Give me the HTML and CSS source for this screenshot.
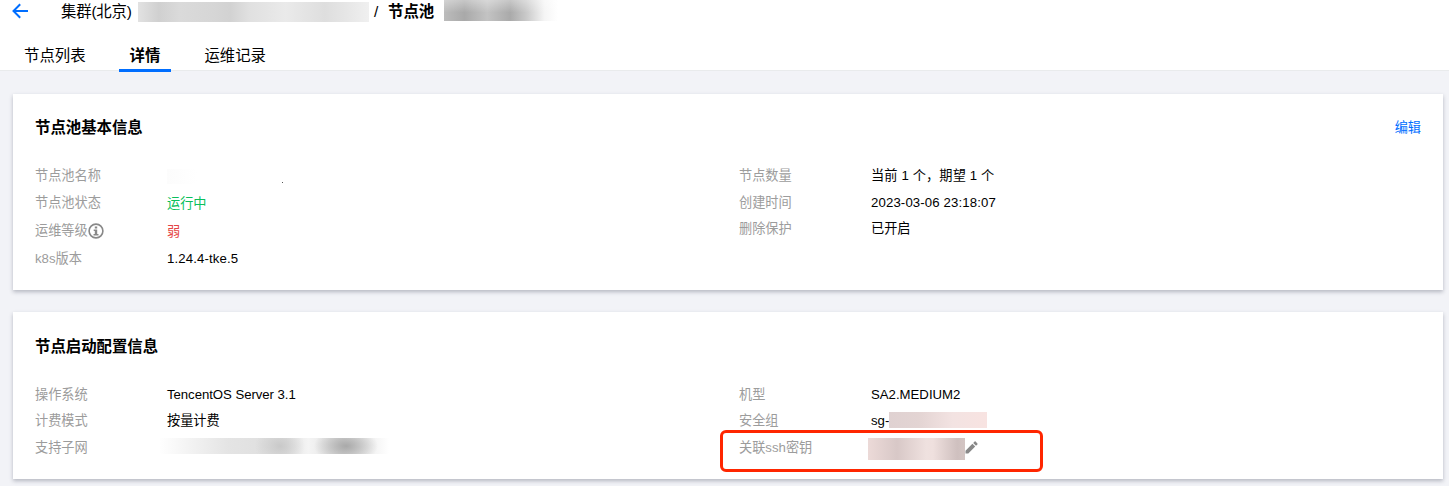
FILE: index.html
```html
<!DOCTYPE html>
<html lang="zh-CN">
<head>
    <meta charset="UTF-8">
    <meta name="viewport" content="width=device-width, initial-scale=1.0">
    <title>节点池详情</title>
    <link rel="stylesheet" href="styles.css">
</head>
<body>
    <header class="header">
        <div class="breadcrumb">
            <svg class="back" viewBox="0 0 16 16" width="16" height="16">
                <path d="M8.2 1.2L1.5 8l6.7 6.8M1.5 8H16" fill="none" stroke="#006eff" stroke-width="2"/>
            </svg>
            <span class="cluster">集群(北京)</span>
            <span class="mask mask-cluster"></span>
            <span class="slash">/</span>
            <span class="pool">节点池</span>
            <span class="mask mask-pool"></span>
        </div>
        <nav class="tabs">
            <a class="tab">节点列表</a>
            <a class="tab active">详情</a>
            <a class="tab">运维记录</a>
        </nav>
    </header>

    <main class="content">
        <section class="card card-basic">
            <div class="card-head">
                <h3>节点池基本信息</h3>
                <a class="edit">编辑</a>
            </div>
            <div class="columns">
                <div class="column">
                    <div class="row"><span class="label">节点池名称</span><span class="mask mask-name"></span></div>
                    <div class="row"><span class="label">节点池状态</span><span class="value running">运行中</span></div>
                    <div class="row level">
                        <span class="label">运维等级<svg class="info" viewBox="0 0 16 16" width="16" height="16">
                            <circle cx="8" cy="8" r="6.9" fill="none" stroke="#888" stroke-width="1.6"/>
                            <path d="M6.8 3.5h2.4v2H6.8zM5.7 6.5h3.5v4.4h1.3v1.5H5.5v-1.5h1.3V8H5.7z" fill="#888"/>
                        </svg></span>
                        <span class="value weak">弱</span>
                    </div>
                    <div class="row version"><span class="label">k8s版本</span><span class="value spaced">1.24.4-tke.5</span></div>
                </div>
                <div class="column">
                    <div class="row"><span class="label">节点数量</span><span class="value spaced">当前 1 个，期望 1 个</span></div>
                    <div class="row"><span class="label">创建时间</span><span class="value spaced">2023-03-06 23:18:07</span></div>
                    <div class="row"><span class="label">删除保护</span><span class="value">已开启</span></div>
                </div>
            </div>
        </section>

        <section class="card card-launch">
            <div class="card-head">
                <h3>节点启动配置信息</h3>
            </div>
            <div class="columns">
                <div class="column">
                    <div class="row"><span class="label">操作系统</span><span class="value os">TencentOS Server 3.1</span></div>
                    <div class="row"><span class="label">计费模式</span><span class="value">按量计费</span></div>
                    <div class="row"><span class="label">支持子网</span><span class="mask mask-subnet"></span></div>
                </div>
                <div class="column">
                    <div class="row"><span class="label">机型</span><span class="value">SA2.MEDIUM2</span></div>
                    <div class="row"><span class="label">安全组</span><span class="value">sg-</span><span class="mask mask-sg"></span></div>
                    <div class="row ssh">
                        <span class="label">关联ssh密钥</span><span class="mask mask-key"></span>
                        <svg class="pencil" viewBox="0 0 13 13" width="13" height="13">
                            <path d="M.5 12.5V9.7L7.4 2.8l2.8 2.8-6.9 6.9zM8.2 2L9.6.6q.5-.5 1 0l1.8 1.8q.5.5 0 1L11 4.8z" fill="#888"/>
                        </svg>
                        <span class="highlight"></span>
                    </div>
                </div>
            </div>
        </section>
    </main>
</body>
</html>
```

FILE: styles.css
```css
body {
    margin: 0;
    height: 486px;
    overflow: hidden;
    background-color: #f2f3f7;
    color: #000;
    font-family: "Liberation Sans", "Noto Sans CJK SC", sans-serif;
    font-size: 13.2px;
}
.header {
    height: 70px;
    background: #fff;
    border-bottom: 1px solid #e9ebec;
}
.breadcrumb {
    display: flex;
    align-items: center;
    height: 22px;
    padding-left: 12px;
    font-size: 15.4px;
    line-height: 22px;
    white-space: nowrap;
}
.back {
    margin-right: 33px;
}
.cluster {
    width: 77px;
    padding-top: 1px;
    letter-spacing: -0.2px;
}
.slash {
    width: 14px;
    margin-left: 5px;
    padding-top: 1px;
}
.pool {
    width: 56px;
    padding-top: 1px;
    font-weight: bold;
}
.mask {
    flex: none;
}
.mask-cluster {
    width: 231px;
    height: 20px;
    margin-top: 2px;
    background: linear-gradient(90deg, #e2e2e2, #d0d0d0 9%, #dadada 18%, #d6d6d6 32%, #d2d2d2 40%, #e0e0e0 48%, #eaeaea 64%, #dedede 81%, #e6e6e6 90%, #f0f0f0);
}
.mask-pool {
    width: 114px;
    height: 21px;
    margin-top: -1px;
    background:
        linear-gradient(180deg, rgba(255, 255, 255, 0.35), transparent 60%),
        linear-gradient(90deg, #bcbcbc, #a9a9a9 18%, #c3c3c3 38%, #aaa 58%, #c9c9c9 72%, #f5f5f5 88%, #fff);
}
.tabs {
    display: flex;
    gap: 22px;
    height: 50px;
    padding-left: 13px;
}
.tab {
    height: 47px;
    padding: 0 11px;
    font-size: 15.4px;
    line-height: 68px;
    border-bottom: 3px solid transparent;
}
.tab.active {
    font-weight: bold;
    border-bottom-color: #006eff;
}
.content {
    display: flex;
    flex-direction: column;
    gap: 22px;
    padding: 23px 6px 0 13px;
}
.card {
    box-sizing: border-box;
    padding: 23px 22px 0;
    background: #fff;
    box-shadow: 0 2px 4px rgba(54, 58, 80, 0.32);
}
.card-basic {
    height: 196px;
}
.card-launch {
    height: 167px;
    padding-top: 24px;
}
.card-head {
    display: flex;
    justify-content: space-between;
    align-items: center;
    height: 22px;
}
h3 {
    margin: 0;
    font-size: 15.4px;
    line-height: 24px;
}
.edit {
    line-height: 20px;
    padding-bottom: 1px;
    color: #006eff;
}
.columns {
    display: grid;
    grid-template-columns: 704px 1fr;
    margin-top: 24px;
}
.card-launch .columns {
    margin-top: 23.5px;
}
.row {
    display: flex;
    align-items: center;
    height: 26.5px;
    line-height: 20px;
}
.row.level,
.row.version {
    height: 28px;
}
.row.level {
    margin-top: 1px;
}
.label {
    display: flex;
    align-items: center;
    width: 132px;
    color: #9c9c9c;
}
.spaced {
    letter-spacing: 0.13px;
}
.os {
    letter-spacing: -0.05px;
}
.running,
.weak {
    padding-top: 2px;
}
.running {
    color: #0abf5b;
}
.weak {
    color: #e54545;
}
.mask-name {
    width: 117px;
    height: 15px;
    background:
        linear-gradient(#555, #555) 115px 13px / 1px 1px no-repeat,
        linear-gradient(90deg, #fcfcfc, #fff) 0 0 / 30px 15px no-repeat;
}
.mask-subnet {
    width: 230px;
    height: 16px;
    margin: -3px 0 0 -8px;
    background:
        radial-gradient(ellipse 32px 18px at 187px 8px, #a9a9a9, transparent),
        radial-gradient(ellipse 25px 20px at 121px 8px, #c9c9c9, transparent),
        linear-gradient(90deg, #fff, #e4e4e4 30%, #e0e0e0 45%, #e3e3e3 55%, #f4f4f4 65%, #ddd 80%, #fff);
}
.mask-sg {
    width: 98px;
    height: 16px;
    margin-top: -2px;
    background: linear-gradient(90deg, #dfd1d1, #e3d4d3 30%, #f3e3e2 65%, #f8e3e1);
}
.mask-key {
    width: 97px;
    height: 22px;
    margin: 2px 0 0 -3px;
    background: linear-gradient(90deg, #ecdad8, #d8c8c7 30%, #efe1df 60%, #efe0de 67%, #cfc0bf 92%, #d3c5c3);
}
.ssh {
    position: relative;
}
.highlight {
    position: absolute;
    top: -5px;
    left: -19px;
    box-sizing: border-box;
    width: 323px;
    height: 42px;
    border: 3px solid #ff2600;
    border-radius: 6px;
}
```
